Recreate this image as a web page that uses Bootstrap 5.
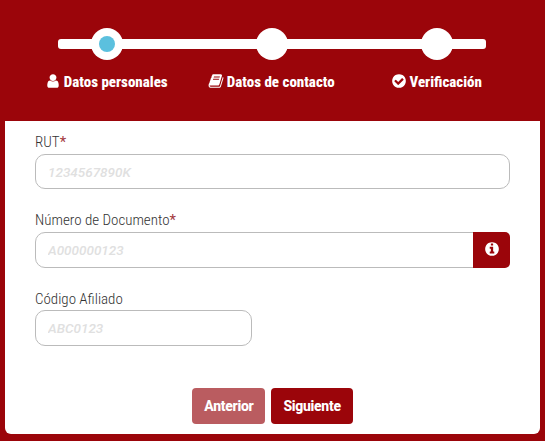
<!DOCTYPE html>
<html lang="es">

<head>
    <meta charset="UTF-8">
    <meta name="viewport" content="width=device-width, initial-scale=1.0">
    <title>Datos personales</title>
    <link href="https://cdn.jsdelivr.net/npm/bootstrap@5.3.0/dist/css/bootstrap.min.css" rel="stylesheet">
    <style>
        body {
            background: #9b050a;
            font-family: Roboto, "Liberation Sans", sans-serif;
            font-stretch: condensed;
            height: 441px;
            overflow: hidden;
        }

        .wizard-head {
            height: 121px;
            padding-top: 28px;
        }

        .step-line {
            position: relative;
            width: 495px;
            margin-left: 24px;
        }

        .step-line::before {
            content: "";
            position: absolute;
            left: 34px;
            width: 428px;
            top: 11px;
            height: 10px;
            background: #fff;
            border-radius: 3px;
        }

        .step-col {
            width: 165px;
            position: relative;
        }

        .step-dot {
            width: 32px;
            height: 32px;
            background: #fff;
        }

        .step-dot i {
            width: 16px;
            height: 16px;
            background: #5bc0de;
        }

        .step-name {
            margin-top: 12px;
            color: #fff;
            font-size: 15px;
            font-weight: 800;
            line-height: 20px;
        }

        .ico {
            width: 16px;
            height: 16px;
            fill: currentColor;
            vertical-align: -2px;
        }

        .step-name .ico {
            margin-right: -1px;
        }

        .form-panel {
            margin: 0 5px;
            height: 313px;
            padding: 11px 30px 0;
            background: #fff;
            border-radius: 0 0 6px 6px;
        }

        .field-label {
            display: block;
            color: #333;
            font-size: 15px;
            font-weight: 300;
            line-height: 20px;
            margin-bottom: 2px;
        }

        .field-label b {
            color: #a33a3e;
            font-weight: 400;
        }

        .form-panel .form-control {
            height: 35px;
            padding: 0 12px;
            font-size: 13.5px;
            border-color: #bbb;
            border-radius: 10px;
        }

        .form-panel .form-control::placeholder {
            color: #e0e0e0;
            font-style: italic;
            font-weight: 500;
        }

        .form-panel .input-group .form-control {
            height: 36px;
            border-top-right-radius: 0;
            border-bottom-right-radius: 0;
        }

        .info-btn {
            width: 37px;
            padding: 0;
            color: #fff;
            background: #9b050a;
            border: 0;
            border-radius: 0 5px 5px 0 !important;
        }

        .field-short {
            width: 217px;
        }

        .field-short .form-control {
            height: 36px !important;
        }

        .field-short .field-label {
            margin-bottom: 1px;
        }

        .form-btn {
            height: 36px;
            padding: 0 12px;
            color: #fff;
            background: #9b050a;
            border: 0;
            font-size: 14px;
            font-weight: 800;
            letter-spacing: -.3px;
            border-radius: 4px;
        }

        .form-btn.is-off {
            background: #ba5c60;
        }

        .btn-row {
            gap: 6px;
            margin-top: 42px;
        }

        .rut-field {
            margin-bottom: 21px;
        }

        .doc-field {
            margin-bottom: 21px;
        }
    </style>
</head>

<body>
    <div class="wizard-head">
        <div class="step-line d-flex">
            <div class="step-col d-flex flex-column align-items-center">
                <span class="step-dot rounded-circle d-flex align-items-center justify-content-center"><i class="rounded-circle"></i></span>
                <div class="step-name text-nowrap">
                    <svg class="ico" viewBox="0 0 1792 1792"><path d="M1536 1399q0 109-62.5 187t-150.5 78h-854q-88 0-150.5-78t-62.5-187q0-85 8.5-160.5t31.5-152 58.5-131 94-89 134.5-34.5q131 128 313 128t313-128q76 0 134.5 34.5t94 89 58.5 131 31.5 152 8.5 160.5zm-256-887q0 159-112.5 271.5t-271.5 112.5-271.5-112.5-112.5-271.5 112.5-271.5 271.5-112.5 271.5 112.5 112.5 271.5z"/></svg>
                    Datos personales
                </div>
            </div>
            <div class="step-col d-flex flex-column align-items-center">
                <span class="step-dot rounded-circle"></span>
                <div class="step-name text-nowrap">
                    <svg class="ico" viewBox="0 0 1792 1792"><path d="M1703 478q40 57 18 129l-275 906q-19 64-76.5 107.5t-122.5 43.5h-923q-77 0-148.5-53.5t-99.5-131.5q-24-67-2-127 0-4 3-27t4-37q1-8-3-21.5t-3-19.5q2-11 8-21t16.5-23.5 16.5-23.5q23-38 45-91.5t30-91.5q3-10 .5-30t-.5-28q3-11 17-28t17-23q21-36 42-92t25-90q1-9-2.5-32t.5-28q4-13 22-30.5t22-22.5q19-26 42.5-84.5t27.5-96.5q1-8-3-25.5t-2-26.5q2-8 9-18t18-23 17-21q8-12 16.5-30.5t15-35 16-36 19.5-32 26.5-23.5 36-11.5 47.5 5.5l-1 3q38-9 51-9h761q74 0 114 56t18 130l-274 906q-36 119-71.5 153.5t-128.5 34.5h-869q-27 0-38 15-11 16-1 43 24 70 144 70h923q29 0 56-15.5t35-41.5l300-987q7-22 5-57 38 15 59 43zm-1064 2q-4 13 2 22.5t20 9.5h608q13 0 25.5-9.5t16.5-22.5l21-64q4-13-2-22.5t-20-9.5h-608q-13 0-25.5 9.5t-16.5 22.5zm-83 256q-4 13 2 22.5t20 9.5h608q13 0 25.5-9.5t16.5-22.5l21-64q4-13-2-22.5t-20-9.5h-608q-13 0-25.5 9.5t-16.5 22.5z"/></svg>
                    Datos de contacto
                </div>
            </div>
            <div class="step-col d-flex flex-column align-items-center">
                <span class="step-dot rounded-circle"></span>
                <div class="step-name text-nowrap">
                    <svg class="ico" viewBox="0 0 1792 1792"><path d="M1412 734q0-28-18-46l-91-90q-19-19-45-19t-45 19l-408 407-226-226q-19-19-45-19t-45 19l-91 90q-18 18-18 46 0 27 18 45l362 362q19 19 45 19 27 0 46-19l543-543q18-18 18-45zm252 162q0 209-103 385.5t-279.5 279.5-385.5 103-385.5-103-279.5-279.5-103-385.5 103-385.5 279.5-279.5 385.5-103 385.5 103 279.5 279.5 103 385.5z"/></svg>
                    Verificación
                </div>
            </div>
        </div>
    </div>

    <form class="form-panel">
        <div class="rut-field">
            <label class="field-label" for="rut">RUT<b>*</b></label>
            <input type="text" class="form-control" id="rut" placeholder="1234567890K">
        </div>
        <div class="doc-field">
            <label class="field-label" for="doc">Número de Documento<b>*</b></label>
            <div class="input-group">
                <input type="text" class="form-control" id="doc" placeholder="A000000123">
                <button type="button" class="btn info-btn">
                    <svg class="ico" viewBox="0 0 1792 1792"><path d="M1152 1376v-160q0-14-9-23t-23-9h-96v-512q0-14-9-23t-23-9h-320q-14 0-23 9t-9 23v160q0 14 9 23t23 9h96v320h-96q-14 0-23 9t-9 23v160q0 14 9 23t23 9h448q14 0 23-9t9-23zm-128-896v-160q0-14-9-23t-23-9h-192q-14 0-23 9t-9 23v160q0 14 9 23t23 9h192q14 0 23-9t9-23zm640 416q0 209-103 385.5t-279.5 279.5-385.5 103-385.5-103-279.5-279.5-103-385.5 103-385.5 279.5-279.5 385.5-103 385.5 103 279.5 279.5 103 385.5z"/></svg>
                </button>
            </div>
        </div>
        <div class="field-short">
            <label class="field-label" for="cod">Código Afiliado</label>
            <input type="text" class="form-control" id="cod" placeholder="ABC0123">
        </div>
        <div class="btn-row d-flex justify-content-center">
            <button type="button" class="form-btn is-off">Anterior</button>
            <button type="button" class="form-btn">Siguiente</button>
        </div>
    </form>

    <script src="https://cdn.jsdelivr.net/npm/bootstrap@5.3.0/dist/js/bootstrap.bundle.min.js"></script>
</body>

</html>
